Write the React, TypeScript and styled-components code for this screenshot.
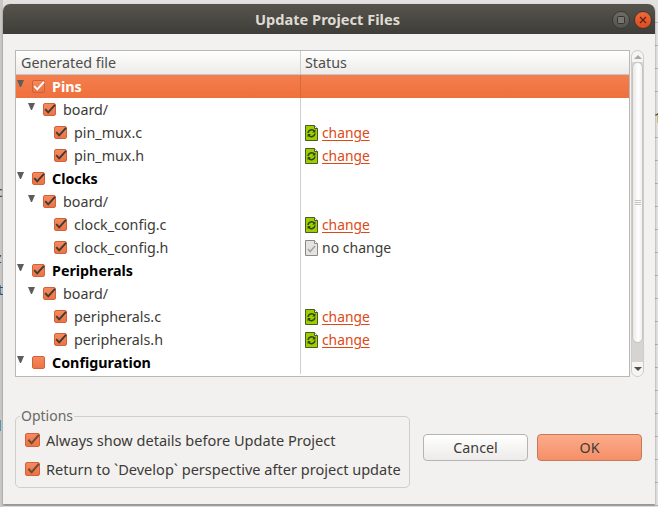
import React from 'react';
import styled, { createGlobalStyle } from 'styled-components';

const GlobalStyle = createGlobalStyle`
  html, body {
    margin: 0;
    padding: 0;
    width: 658px;
    height: 507px;
    overflow: hidden;
    background: #d8d7d5;
    font-family: 'Noto Sans', 'Open Sans', sans-serif;
  }
`;

const Desktop = styled.div`
  position: relative;
  width: 658px;
  height: 507px;
  box-sizing: border-box;
  padding: 4px 3px 3px 3px;
  overflow: hidden;
  background:
    linear-gradient(to right, #c9c8c7 0 3px, transparent 3px),
    repeating-linear-gradient(to bottom, #e2e1df 0 22px, #b5b4b2 22px 23px);
`;

const BehindGlyph = styled.span<{ $x: number; $y: number; $color?: string }>`
  position: absolute;
  left: ${({ $x }) => $x}px;
  top: ${({ $y }) => $y}px;
  font-size: 14px;
  line-height: 16px;
  color: ${({ $color }) => $color ?? '#3c4a55'};
`;

const Window = styled.div`
  position: relative;
  height: 100%;
  display: flex;
  flex-direction: column;
  background: #f2f1f0;
  border-radius: 7px 7px 0 0;
  box-shadow: 0 1px 2px rgba(0, 0, 0, 0.45);
  overflow: hidden;
`;

const TitleBar = styled.div`
  flex: 0 0 30px;
  box-sizing: border-box;
  padding: 0 3px 1px 0;
  position: relative;
  display: flex;
  align-items: center;
  justify-content: center;
  background: linear-gradient(to bottom, #57544d, #3e3d38);
  color: #dfdbd2;
  font-size: 14.6px;
  font-weight: 700;
`;

const WindowButtons = styled.div`
  position: absolute;
  top: 7px;
  right: 3px;
  display: flex;
  gap: 4px;
`;

const RoundButton = styled.div<{ $close?: boolean }>`
  width: 16px;
  height: 16px;
  border-radius: 50%;
  display: flex;
  align-items: center;
  justify-content: center;
  background: ${({ $close }) =>
    $close ? 'linear-gradient(#f2683a, #dc4c1f)' : 'linear-gradient(#6e6c66, #55534e)'};
  border: 0.5px solid #3a3934;
`;

const Content = styled.div`
  flex: 1;
  display: flex;
  flex-direction: column;
  padding: 16px 8px 0 12px;
`;

const TableRow = styled.div`
  display: flex;
  height: 327px;
  gap: 1px;
`;

const Table = styled.div`
  flex: 0 0 615px;
  box-sizing: border-box;
  border: 1px solid #b9b8b4;
  background: #fff;
  display: flex;
  flex-direction: column;
`;

const HeaderRow = styled.div`
  flex: 0 0 23px;
  display: grid;
  grid-template-columns: 285px 1fr;
  background: linear-gradient(to bottom, #fff, #ecebe9);
  border-bottom: 1px solid #c6c5c2;
`;

const HeaderCell = styled.div<{ $first?: boolean }>`
  display: flex;
  align-items: center;
  padding-left: ${({ $first }) => ($first ? '5px' : '4px')};
  font-size: 14.3px;
  color: #4e4d49;
  border-right: ${({ $first }) => ($first ? '1px solid #cfcecb' : 'none')};
`;

const Row = styled.div<{ $selected?: boolean }>`
  flex: 0 0 23px;
  display: grid;
  grid-template-columns: 285px 1fr;
  background: ${({ $selected }) =>
    $selected ? 'linear-gradient(to bottom, #f47f4e, #ee703d)' : 'transparent'};
`;

const NameCell = styled.div<{ $level: number; $selected?: boolean }>`
  display: flex;
  align-items: center;
  padding-left: ${({ $level }) => 1 + $level * 11}px;
  border-right: 1px solid ${({ $selected }) => ($selected ? '#d9693c' : '#cfcecb')};
`;

const Twisty = styled.span<{ $hidden?: boolean }>`
  width: 7px;
  height: 0;
  margin-bottom: 6px;
  margin-right: 8px;
  border-top: 7px solid ${({ $hidden }) => ($hidden ? 'transparent' : '#5e5d59')};
  border-left: 3.5px solid transparent;
  border-right: 3.5px solid transparent;
  box-sizing: border-box;
`;

const Box = styled.span<{ $w: number; $h: number }>`
  flex: none;
  width: ${({ $w }) => $w}px;
  height: ${({ $h }) => $h}px;
  box-sizing: border-box;
  border-radius: 2px;
  border: 1px solid #d0623a;
  background: linear-gradient(#f58a5e, #ec7344);
  display: flex;
  align-items: center;
  justify-content: center;
`;

const FileName = styled.span<{ $bold?: boolean; $selected?: boolean }>`
  margin-left: 7px;
  font-size: 14.3px;
  white-space: nowrap;
  font-weight: ${({ $bold }) => ($bold ? 700 : 400)};
  color: ${({ $bold, $selected }) => ($selected ? '#fff' : $bold ? '#000' : '#3c3b37')};
`;

const StatusCell = styled.div`
  display: flex;
  align-items: center;
  gap: 4px;
  padding-left: 4px;
`;

const ChangeLink = styled.a`
  font-size: 13.8px;
  color: #dd4814;
  text-decoration: underline;
  text-underline-offset: 2px;
`;

const NoChange = styled.span`
  font-size: 14px;
  color: #3c3b37;
`;

const Scrollbar = styled.div`
  flex: 0 0 13px;
  box-sizing: border-box;
  border: 1px solid #cdccc9;
  border-radius: 7px;
  background: #d5d4d1;
  display: flex;
  flex-direction: column;
  overflow: hidden;
`;

const ScrollCap = styled.div<{ $height: number }>`
  flex: 0 0 ${({ $height }) => $height}px;
  background: #f5f4f3;
  display: flex;
  align-items: center;
  justify-content: center;
`;

const ScrollThumb = styled.div`
  flex: 0 0 281px;
  box-sizing: border-box;
  border: 1px solid #c4c3c0;
  border-radius: 6px;
  background: linear-gradient(to right, #e9e8e6, #fff 60%, #f0efed);
  display: flex;
  align-items: center;
  justify-content: center;
`;

const ScrollTrough = styled.div`
  flex: 1;
`;

const Arrow = styled.span<{ $up?: boolean }>`
  width: 0;
  height: 0;
  border-left: 4px solid transparent;
  border-right: 4px solid transparent;
  ${({ $up }) => ($up ? 'border-bottom: 4px solid #a9a8a5;' : 'border-top: 4px solid #4e4d49;')}
`;

const Grip = styled.span`
  width: 6px;
  height: 6px;
  background: repeating-linear-gradient(to bottom, #c4c3c0 0 1px, transparent 1px 2px);
`;

const Bottom = styled.div`
  display: flex;
  align-items: flex-end;
  margin-top: 39px;
`;

const Options = styled.fieldset`
  width: 395px;
  height: 80px;
  box-sizing: border-box;
  margin: -8px 0 0 0;
  padding: 5px 0 0 9px;
  border: 1px solid #cfcecb;
  border-radius: 5px;
  display: flex;
  flex-direction: column;
  gap: 7px;
`;

const Legend = styled.legend`
  margin-left: -5px;
  padding: 0 1px;
  font-size: 14px;
  line-height: 16px;
  color: #6a6964;
`;

const OptionRow = styled.label`
  display: flex;
  align-items: center;
  gap: 6px;
  height: 22px;
  font-size: 14.55px;
  white-space: nowrap;
  color: #3c3b37;
`;

const Buttons = styled.div`
  display: flex;
  gap: 9px;
  margin-left: 13px;
  margin-bottom: 27px;
`;

const Button = styled.button<{ $primary?: boolean }>`
  width: 105px;
  height: 27px;
  padding: 0;
  border-radius: 4px;
  font-family: inherit;
  font-size: 14.3px;
  color: #3c3b37;
  border: 1px solid ${({ $primary }) => ($primary ? '#c27a5a' : '#b5b4b0')};
  background: ${({ $primary }) =>
    $primary ? 'linear-gradient(#fcac8a, #f58f68)' : 'linear-gradient(#fff, #ecebe9)'};
`;

const Check: React.FC<{ color?: string; size?: number }> = ({ color = '#3f3a36', size = 13 }) => (
  <svg width={size} height={size} viewBox="0 0 13 13" fill="none" style={{ overflow: 'visible' }}>
    <path d="M2.2 6.2 L5.2 9.4 L12 1.8" stroke={color} strokeWidth="1.9" />
  </svg>
);

const ChangedIcon: React.FC = () => (
  <svg width="13" height="16" viewBox="0 0 13 16">
    <path d="M.5.5H9.5L12.5 3.5V15.5H.5Z" fill="#9ccf00" stroke="#4c5a2a" />
    <path d="M9.5.5V3.5H12.5" fill="#fff" stroke="#4c5a2a" />
    <path d="M3 8A3.6 3.6 0 0 1 9.4 6.2M10 8.5A3.6 3.6 0 0 1 3.6 10.3" fill="none" stroke="#34421c" strokeWidth="1.6" />
    <path d="M10.4 4.2V7.4H7.2ZM2.6 12.2V9H5.8Z" fill="#34421c" />
  </svg>
);

const UnchangedIcon: React.FC = () => (
  <svg width="13" height="16" viewBox="0 0 13 16">
    <path d="M.5.5H9.5L12.5 3.5V15.5H.5Z" fill="#e4e3e1" stroke="#8b8a87" />
    <path d="M9.5.5V3.5H12.5" fill="#fff" stroke="#8b8a87" />
    <path d="M3 9L5.2 11.5L10 6" fill="none" stroke="#a3a2a0" strokeWidth="1.5" />
  </svg>
);

type Item = {
  name: string;
  level: number;
  bold?: boolean;
  twisty?: boolean;
  selected?: boolean;
  partial?: boolean;
  status?: 'change' | 'same';
};

const items: Item[] = [
  { name: 'Pins', level: 0, bold: true, twisty: true, selected: true },
  { name: 'board/', level: 1, twisty: true },
  { name: 'pin_mux.c', level: 2, status: 'change' },
  { name: 'pin_mux.h', level: 2, status: 'change' },
  { name: 'Clocks', level: 0, bold: true, twisty: true },
  { name: 'board/', level: 1, twisty: true },
  { name: 'clock_config.c', level: 2, status: 'change' },
  { name: 'clock_config.h', level: 2, status: 'same' },
  { name: 'Peripherals', level: 0, bold: true, twisty: true },
  { name: 'board/', level: 1, twisty: true },
  { name: 'peripherals.c', level: 2, status: 'change' },
  { name: 'peripherals.h', level: 2, status: 'change' },
  { name: 'Configuration', level: 0, bold: true, twisty: true, partial: true },
];

const App: React.FC = () => (
  <Desktop>
    <GlobalStyle />
    <BehindGlyph $x={-4} $y={184}>c</BehindGlyph>
    <BehindGlyph $x={-5} $y={250}>z</BehindGlyph>
    <BehindGlyph $x={-2} $y={282}>t</BehindGlyph>
    <BehindGlyph $x={-2} $y={418}>l</BehindGlyph>
    <BehindGlyph $x={654} $y={110} $color="#4a4a40">1</BehindGlyph>
    <Window>
      <TitleBar>
        Update Project Files
        <WindowButtons>
          <RoundButton>
            <svg width="8" height="8" viewBox="0 0 8 8">
              <rect x="0.5" y="0.5" width="7" height="7" rx="1" fill="#77756f" stroke="#35342f" />
            </svg>
          </RoundButton>
          <RoundButton $close>
            <svg width="8" height="8" viewBox="0 0 8 8">
              <path d="M1 1L7 7M7 1L1 7" stroke="#5a2410" strokeWidth="1.2" />
            </svg>
          </RoundButton>
        </WindowButtons>
      </TitleBar>
      <Content>
        <TableRow>
          <Table>
            <HeaderRow>
              <HeaderCell $first>Generated file</HeaderCell>
              <HeaderCell>Status</HeaderCell>
            </HeaderRow>
            {items.map((item, i) => (
              <Row key={i} $selected={item.selected}>
                <NameCell $level={item.level} $selected={item.selected}>
                  {item.twisty ? <Twisty /> : <Twisty $hidden />}
                  <Box $w={13} $h={13}>
                    {!item.partial && <Check color={item.selected ? '#fff' : '#3f3a36'} />}
                  </Box>
                  <FileName $bold={item.bold} $selected={item.selected}>
                    {item.name}
                  </FileName>
                </NameCell>
                <StatusCell>
                  {item.status === 'change' && (
                    <>
                      <ChangedIcon />
                      <ChangeLink>change</ChangeLink>
                    </>
                  )}
                  {item.status === 'same' && (
                    <>
                      <UnchangedIcon />
                      <NoChange>no change</NoChange>
                    </>
                  )}
                </StatusCell>
              </Row>
            ))}
          </Table>
          <Scrollbar>
            <ScrollCap $height={11}>
              <Arrow $up />
            </ScrollCap>
            <ScrollThumb>
              <Grip />
            </ScrollThumb>
            <ScrollTrough />
            <ScrollCap $height={14}>
              <Arrow />
            </ScrollCap>
          </Scrollbar>
        </TableRow>
        <Bottom>
          <Options>
            <Legend>Options</Legend>
            <OptionRow>
              <Box $w={15} $h={14}>
                <Check size={14} color="#6d4a3a" />
              </Box>
              Always show details before Update Project
            </OptionRow>
            <OptionRow>
              <Box $w={15} $h={14}>
                <Check size={14} color="#6d4a3a" />
              </Box>
              Return to `Develop` perspective after project update
            </OptionRow>
          </Options>
          <Buttons>
            <Button>Cancel</Button>
            <Button $primary>OK</Button>
          </Buttons>
        </Bottom>
      </Content>
    </Window>
  </Desktop>
);

export default App;
